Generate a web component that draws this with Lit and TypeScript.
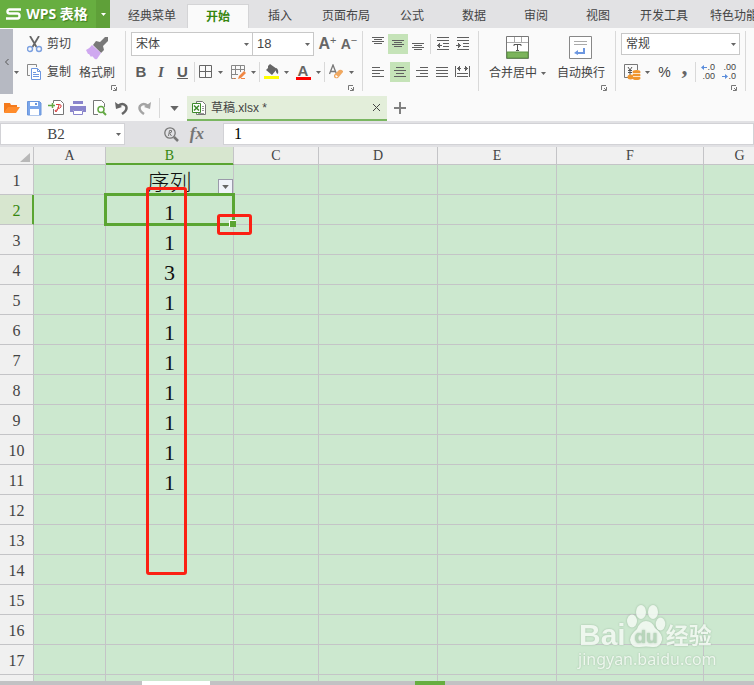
import { LitElement, html, css, nothing } from "lit";
import { customElement, state } from "lit/decorators.js";
import { classMap } from "lit/directives/class-map.js";

const GREY = "#5f5f5f";

const caret = html`<svg class="caret" width="5" height="3" viewBox="0 0 5 3" aria-hidden="true"><path d="M0 0h5L2.5 3z" fill="currentColor"/></svg>`;
const launcher = html`<button class="launcher" aria-label="更多设置"><svg width="6" height="6" viewBox="0 0 6 6"><path d="M.5 5V.5H5" fill="none" stroke="#777"/><path d="M5.500 2v3.500H2M3 3l2 2" fill="none" stroke="#777"/></svg></button>`;

const scissors = html`<svg width="16" height="17" viewBox="0 0 16 17"><path d="M3 0l6.500 11M12 0L5.500 11" stroke="#666" stroke-width="1.800" fill="none"/><circle cx="3" cy="13" r="2.500" fill="none" stroke="#7ba0e0" stroke-width="1.400"/><circle cx="12" cy="13" r="2.500" fill="none" stroke="#7ba0e0" stroke-width="1.400"/></svg>`;
const copy = html`<svg width="16" height="17" viewBox="0 0 16 17"><path d="M3 11.500H.5V.5h9V3" fill="none" stroke="#888"/><path d="M4.500 4.500h6l3 3v8h-9z" fill="#fff" stroke="#6d97e0"/><path d="M10.500 4.500v3h3" fill="none" stroke="#6d97e0"/><path d="M6 8.500h3M6 10.500h6M6 12.500h6" stroke="#6d97e0"/></svg>`;
const brush = html`<svg width="24" height="24" viewBox="0 0 24 24"><path d="M20 1l3 0 0 4-5 5 1 4-3 3-8-8 3-4 4 1z" fill="#787878"/><path d="M7 9l9 8-4 6q-2 1-3-1l-2-2-1 1-2-3-1 0-2-4q4-2 6-5z" fill="#cfa8f0"/></svg>`;
const borders = html`<svg width="14" height="14" viewBox="0 0 14 14"><path d="M.5.5h12v12H.5zM6.500 1v12M1 6.500h12" fill="none" stroke="#666"/></svg>`;
const drawGrid = html`<svg width="16" height="15" viewBox="0 0 16 15"><path d="M.5.5h13v6M.5.5v13H5M4.500 1v9M9.500 1v6M1 4.500h12M1 9.500h6" fill="none" stroke="#888"/><path d="M8 11l5-5 2 2-5 5-3 1z" fill="#f08744"/><path d="M2 13.500h1M4 13.500h1M10 13.500h4" stroke="#f08744"/></svg>`;
const bucket = html`<svg width="16" height="16" viewBox="0 0 16 16"><path d="M6 0l7 5-5 6-6-5 2-2V2z" fill="#666"/><path d="M12 4q3 1 2 6-3-1-2-6z" fill="#666"/><path d="M0 12h15v3H0z" fill="#ff0"/></svg>`;
const eraser = html`<svg width="16" height="16" viewBox="0 0 16 16"><path d="M.5 10L4 1l3.500 9M2 7.500h4" stroke="#777" stroke-width="1.300" fill="none"/><path d="M5 11l5-5q2-1 4 1v1l-5 6q-3 1-4-1z" fill="#f0a860"/><path d="M7 11l2 1.500-1.500 1L6 12z" fill="#fff"/></svg>`;
const lines = (d: string) => html`<svg width="14" height="14" viewBox="0 0 14 14"><path d=${d} stroke=${GREY} fill="none"/></svg>`;
const alignTop = lines("M1 .5h12M3 2.500h8M1 4.500h12M3 6.500h8");
const alignMiddle = lines("M1 3.500h12M3 5.500h8M1 7.500h12M3 9.500h8");
const alignBottom = lines("M1 6.500h12M3 8.500h8M1 10.500h12M3 12.500h8");
const outdent = lines("M1 .5h12M1 3.500h12M7 6.500h6M7 9.500h6M1 12.500h12M1 8.500h5M3.500 6v5M2.500 7v3");
const indent = lines("M1 .5h12M1 3.500h12M7 6.500h6M7 9.500h6M1 12.500h12M0 8.500h5M2.500 6v5M3.500 7v3");
const left = lines("M1 2.500h8M1 5.500h12M1 8.500h8M1 11.500h12");
const center = lines("M3 2.500h8M1 5.500h12M3 8.500h8M1 11.500h12");
const right = lines("M5 2.500h8M1 5.500h12M5 8.500h8M1 11.500h12");
const justify = lines("M1 2.500h12M1 5.500h12M1 8.500h12M1 11.500h12");
const distribute = html`<svg width="15" height="14" viewBox="0 0 15 14"><path d="M.5 1v11M14.500 1v11M2 8.500h11M2 11.500h11M2 3.500h4M9 3.500h4M4.500 1v5M3.500 2v3M10.500 1v5M11.500 2v3" stroke=${GREY} fill="none"/></svg>`;
const merge = html`<svg width="24" height="24" viewBox="0 0 24 24"><path d="M.5.5h22v22H.5z" fill="#fff" stroke="#777"/><path d="M1 6.500h21M8.500 1v5M15.500 1v5" stroke="#aaa"/><path d="M1 16h21v6H1z" fill="#7cb45c" stroke="#5a9440"/><path d="M8 10V8.500h7V10M11.500 9v5M10 14.500h3" fill="none" stroke="#555"/></svg>`;
const wrap = html`<svg width="24" height="24" viewBox="0 0 24 24"><path d="M.5.5h22v22H.5z" fill="#fff" stroke="#888"/><path d="M5 5.500h13M5 8.500h13" stroke="#aaa"/><path d="M14 12h2v6H9v1l-4-2 4-3v2h5z" fill="#6d97e0"/></svg>`;
const coins = html`<svg width="17" height="17" viewBox="0 0 17 17"><path d="M8 13.500H.5V.5h13V6" fill="none" stroke="#777"/><path d="M4 3l2 3 2-3M6 6v5M4 6.500h4M4 8.500h4" fill="none" stroke="#555"/><g fill="#f0962e"><ellipse cx="12.500" cy="8" rx="4" ry="2"/><ellipse cx="12.500" cy="11" rx="4" ry="2"/><ellipse cx="12.500" cy="14" rx="4" ry="2"/><ellipse cx="6.500" cy="13" rx="3" ry="2.500"/></g><path d="M9 9.500h7M9 12.500h7" stroke="#fde4c4"/></svg>`;
const arrowLeft = html`<svg width="6" height="5" viewBox="0 0 6 5"><path d="M0 2.500L3 0v2h3v1H3v2z" fill="#5b8ddb"/></svg>`;
const arrowRight = html`<svg width="6" height="5" viewBox="0 0 6 5"><path d="M6 2.500L3 0v2H0v1h3v2z" fill="#5b8ddb"/></svg>`;

const open = html`<svg width="16" height="14" viewBox="0 0 16 14"><path d="M0 12V2h6l1 2h6v2H5z" fill="#f47a1c"/><path d="M4 6h12l-4 6H0z" fill="#ff8c2c"/></svg>`;
const save = html`<svg width="15" height="15" viewBox="0 0 15 15"><path d="M.5.5h12l1.500 1.500v12H.5z" fill="#7ba6ea" stroke="#6b96dc"/><path d="M3 1h8v4H3zM3 8h9v6H3z" fill="#fff"/><path d="M8 2h2v2H8z" fill="#6b96dc"/></svg>`;
const pdf = html`<svg width="17" height="16" viewBox="0 0 17 16"><path d="M5.500 9v5.500h10v-11l-3-3h-7V3" fill="#fff" stroke="#777"/><path d="M8 4.500h3q3 0 2 2.500-1 2-4 1M11 4.500q0 4-3 7.500l-1-1.500 3-1" fill="none" stroke="#d64040"/><path d="M0 5.500h2M4.500 3v5M2 5.500h5" fill="none" stroke="#63a843" stroke-width="1.500"/></svg>`;
const print = html`<svg width="16" height="14" viewBox="0 0 16 14"><path d="M3 0h10v3H3zM0 5h16v6H0z" fill="#8a85cc"/><path d="M3 4h10M3 9.500h10" stroke="#fff"/><path d="M3.500 9.500h9v4h-9z" fill="#fff" stroke="#8a85cc"/></svg>`;
const preview = html`<svg width="14" height="16" viewBox="0 0 14 16"><path d="M5 14.500H.5V.5h8l3 3V7" fill="#fff" stroke="#777"/><circle cx="8" cy="9.500" r="3" fill="#fff" stroke="#63a843" stroke-width="1.500"/><path d="M10 12l3 3" stroke="#63a843" stroke-width="2"/></svg>`;
const undo = html`<svg width="14" height="14" viewBox="0 0 14 14"><path d="M3 5q5-4 8 0 2 4-4 8" fill="none" stroke="#666" stroke-width="2.500"/><path d="M0 1l1 7 6-2z" fill="#666"/></svg>`;
const redo = html`<svg width="14" height="14" viewBox="0 0 14 14"><path d="M11 5Q6 1 3 5q-2 4 4 8" fill="none" stroke="#a4a4a4" stroke-width="2.500"/><path d="M14 1l-1 7-6-2z" fill="#a4a4a4"/></svg>`;
const workbook = html`<svg width="14" height="14" viewBox="0 0 14 14"><path d="M4.500.5h6l3 3v10h-9z" fill="#fff" stroke="#777"/><path d="M10 5.500h2M10 7.500h2M10 9.500h2M6 12.500h6" stroke="#999"/><path d="M.5 2.500h8v9h-8z" fill="#fff" stroke="#3d8a2c"/><path d="M2 4.500l5 5M7 4.500l-5 5" stroke="#3d8a2c" stroke-width="1.500"/></svg>`;
const lookup = html`<svg width="15" height="15" viewBox="0 0 15 15"><circle cx="6" cy="6" r="5.200" fill="none" stroke="#777" stroke-width="1.300"/><path d="M10 10l4 4" stroke="#777" stroke-width="2.500"/><path d="M4.500 9l1-5.500h2q1 2-2 2.500l2 3" fill="none" stroke="#777"/></svg>`;

const TABS = ["经典菜单", "开始", "插入", "页面布局", "公式", "数据", "审阅", "视图", "开发工具", "特色功能"];
const COLUMNS = ["A", "B", "C", "D", "E", "F", "G"];
const VALUES = ["序列", "1", "1", "3", "1", "1", "1", "1", "1", "1", "1"];
const ROWS = 17;

@customElement("app-root")
export class AppRoot extends LitElement {
  @state() private active = "开始";

  static styles = css`
    :host { display: flex; flex-direction: column; height: 100vh; overflow: hidden; background: #fafafa; color: #444; font: 12px/16px "Liberation Sans", "Noto Sans CJK SC", sans-serif; }
    * { box-sizing: border-box; }
    svg { display: block; flex: none; }
    button, input, select { font: inherit; color: inherit; margin: 0; padding: 0; border: 0; background: none; border-radius: 0; outline: 0; }
    button { display: flex; align-items: center; justify-content: center; white-space: nowrap; flex: none; }
    .caret { color: #666; }

    .titlebar { display: flex; flex: none; height: 28px; background: #e2e2e4; overflow: hidden; }
    .brand { width: 96px; padding-right: 2px; background: #67ae40; color: #fff; gap: 5px; font: bold 14px/20px "Open Sans", "Noto Sans CJK SC", sans-serif; text-shadow: 1px 1px 1px #3f7d22; }
    .brand-menu { width: 14px; background: #5fa039; margin-right: 7px; }
    .brand-menu .caret { color: #fff; }
    .tabs { display: flex; align-items: flex-end; }
    .tab { height: 24px; min-width: 62px; padding: 0 11px; }
    .tab.on { background: #fafafa; color: #35860f; font-weight: bold; border: 1px solid #d4d4d6; border-bottom: 0; }

    .ribbon { display: flex; flex: none; height: 67px; overflow: hidden; padding-top: 1px; }
    .collapse { width: 13px; height: 65px; background: #b6b9c2; }
    .group { position: relative; flex: none; height: 60px; margin-top: 2px; border-right: 1px solid #d9d9d9; display: flex; flex-direction: column; gap: 2px; }
    .launcher { position: absolute; right: 8px; bottom: 0; }
    .row { display: flex; align-items: center; height: 26px; }
    .sep { width: 1px; height: 20px; background: #d9d9d9; flex: none; }
    .clip { width: 113px; flex-direction: row; gap: 8px; padding-left: 1px; }
    .edge { width: 5px; height: 38px; align-self: flex-end; }
    .stack { display: flex; flex-direction: column; gap: 2px; }
    .stack button { height: 26px; gap: 4px; }
    .big { flex-direction: column; height: 52px; justify-content: space-between; padding: 5px 0 2px; }
    .big .text { display: flex; align-items: center; gap: 4px; }
    .font { width: 237px; padding-left: 5px; }
    .pick { position: relative; display: flex; align-items: center; height: 24px; border: 1px solid #c8c8c8; background: #fff; }
    .pick select { appearance: none; width: 100%; height: 100%; padding-left: 4px; }
    .pick .caret { position: absolute; right: 3px; pointer-events: none; }
    .pick.family { width: 122px; }
    .pick.size { width: 62px; margin-left: -1px; }
    .size select { font-size: 13px; }
    .pick.format { width: 119px; height: 22px; }
    .grow { width: 23px; font-size: 16px; font-weight: bold; color: #666; margin-left: 2px; }
    .grow.small { font-size: 14px; margin: 0; width: 20px; }
    sup { font-size: 11px; line-height: 8px; align-self: flex-start; font-weight: normal; }
    .b { width: 20px; font: bold 15px/20px "Liberation Sans", sans-serif; color: #5c5c5c; }
    .i { font-family: "Liberation Serif", serif; font-style: italic; }
    .u { text-decoration: underline; width: 23px; }
    .drop { width: 32px; gap: 5px; }
    .wide { gap: 4px; }
    .ink { font: bold 15px/12px "Liberation Sans", sans-serif; color: #666; border-bottom: 3px solid #f00; width: 15px; text-align: center; }
    .align { width: 116px; padding-left: 5px; }
    .align button { width: 20px; height: 20px; }
    .align .row2 button:nth-child(2), .align .row2 button:nth-child(1) { margin-right: 2px; }
    .align .on { background: #c5e3b8; }
    .align .sep { margin: 0 2px; }
    .cells { width: 137px; flex-direction: row; gap: 11px; padding-left: 10px; }
    .number { width: 130px; padding-left: 5px; }
    .percent { width: 23px; font-size: 14px; }
    .comma { width: 19px; font: bold 24px/10px "Liberation Serif", serif; color: #666; padding: 0 2px 12px 0; }
    .decimal { flex-direction: column; width: 19px; font-size: 9px; line-height: 9px; align-items: flex-end; }
    .decimal span { display: flex; align-items: center; }
    .decimal + .decimal { margin-left: 2px; }

    .docbar { display: flex; align-items: center; flex: none; height: 26px; }
    .quick { display: flex; width: 159px; padding-left: 1px; }
    .quick button { width: 22px; }
    .more { width: 29px; }
    .more svg { width: 9px; height: 5px; }
    .doc { display: flex; align-items: center; gap: 5px; width: 200px; height: 25px; margin-left: -2px; padding: 0 6px 0 5px; background: #e3eeda; border-bottom: 2px solid #7ab661; align-self: flex-end; }
    .doc .name { flex: 1; color: inherit; text-decoration: none; }
    .add { width: 26px; }

    .formula { display: flex; align-items: center; flex: none; height: 26px; background: #e1e1e4; font-family: "Liberation Serif", serif; }
    .namebox { position: relative; width: 125px; height: 22px; display: flex; align-items: center; background: #fff; border: 1px solid #d2d2d6; }
    .namebox input { width: 110px; text-align: center; font-size: 15px; }
    .namebox .caret { position: absolute; right: 3px; }
    .tools { display: flex; align-items: center; justify-content: flex-end; gap: 11px; width: 98px; padding-right: 19px; }
    .fx { font: italic bold 17px/20px "Liberation Serif", serif; color: #757575; }
    .entry { flex: 1; min-width: 0; height: 22px; padding-left: 10px; background: #fff; border: 1px solid #d2d2d6; font-size: 16px; color: #000; }

    .sheet { position: relative; flex: 1; min-height: 0; overflow: hidden; background: #cce8cf; }
    table { table-layout: fixed; border-collapse: separate; border-spacing: 0; width: 100%; min-width: 776px; }
    th, td { border: 0 solid #c4c4c7; border-width: 0 1px 1px 0; padding: 0; text-align: center; overflow: visible; }
    th { background: #f0f0f0; font: 16px/20px "Liberation Serif", serif; color: #444; }
    thead th { height: 18px; line-height: 16px; padding-top: 1px; font-size: 14px; }
    tbody th, td { height: 30px; }
    tbody th { padding-top: 2px; }
    td { position: relative; font: 22px/23px "Liberation Serif", "Noto Sans CJK SC", serif; color: #111; padding-top: 6px; }
    td.title { font-weight: 300; }
    thead th.on { background: #d7e6cf; color: #35860f; border-bottom-color: #5aa532; box-shadow: inset 0 -1px #5aa532; }
    tbody th.on { background: #d7e6cf; color: #35860f; border-right-color: #5aa532; box-shadow: inset -1px 0 #5aa532; }
    .c0 { width: 34px; } .c1 { width: 72px; } .c2 { width: 128px; } .c3 { width: 85px; } .c4, .c5 { width: 119px; } .c6 { width: 147px; }
    .corner svg { margin: 2px 3px 0 auto; }
    .filter { position: absolute; right: 0; bottom: 0; width: 15px; height: 15px; background: #f0f3fa; border: 1px solid #9a9aaa; z-index: 1; }
    .filter svg { width: 7px; height: 4px; }
    .cursor { position: absolute; inset: -2px; border: 3px solid #5aa532; z-index: 1; }
    .handle { position: absolute; right: -4px; bottom: -4px; width: 7px; height: 7px; background: #5aa532; border: 1px solid #fff; border-width: 1px 0 0 1px; }
    .mark { position: absolute; border: 3px solid #fb2013; border-radius: 3px; z-index: 2; }
    .mark.column { left: 146px; top: 40px; width: 41px; height: 388px; }
    .mark.corner-mark { left: 217px; top: 67px; width: 35px; height: 21px; }

    .watermark { position: absolute; right: 40px; bottom: 12px; z-index: 2; width: 136px; color: #f4faf4; opacity: .85; text-shadow: 0 0 2px #93b097; white-space: nowrap; }
    .logo { display: flex; align-items: flex-end; height: 45px; font: bold 30px/28px "Liberation Sans", sans-serif; padding-left: 1px; }
    .logo .zh { font: bold 23px/30px "Noto Sans CJK SC", sans-serif; }
    .site { font: 16px/20px "Noto Sans", sans-serif; }
    .paw { filter: drop-shadow(0 0 1px #93b097); }

    .status { display: flex; flex: none; height: 4px; background: #c2c2c4; }
    .sheet-tab { width: 68px; margin-left: 142px; background: #fff; }
    .mode { width: 30px; margin-left: 205px; background: #67ae40; }
  `;

  private btn(label: string, content: unknown, cls = "") {
    return html`<button class=${cls} aria-label=${label}>${content}</button>`;
  }

  private cell(row: number, col: number) {
    if (col !== 1) return html`<td></td>`;
    return html`<td class=${row === 0 ? "title" : ""}>${VALUES[row] ?? nothing}
      ${row === 0 ? html`<button class="filter" aria-label="筛选">${caret}</button>` : nothing}
      ${row === 1 ? html`<div class="cursor"><div class="handle"></div></div>` : nothing}</td>`;
  }

  render() {
    return html`
      <header class="titlebar">
        <button class="brand"><svg width="15" height="12" viewBox="0 0 15 12"><path d="M15 1.500H3.500q-2 0-2 2T3.500 5.500h8q2 0 2 2.500t-2 2.500H0" fill="none" stroke="#fff" stroke-width="2.400"/></svg>WPS 表格</button>
        ${this.btn("主菜单", caret, "brand-menu")}
        <nav class="tabs">${TABS.map((t) => html`<button class=${classMap({ tab: true, on: t === this.active })} @click=${() => (this.active = t)}>${t}</button>`)}</nav>
      </header>

      <section class="ribbon">
        ${this.btn("收起", html`<svg width="4" height="6" viewBox="0 0 4 6"><path d="M3.500 0l-3 3 3 3" fill="none" stroke="#555"/></svg>`, "collapse")}
        <div class="group clip">
          ${this.btn("粘贴选项", caret, "edge")}
          <div class="stack"><button>${scissors}剪切</button><button>${copy}复制</button></div>
          <button class="big">${brush}<span class="text">格式刷</span></button>
          ${launcher}
        </div>
        <div class="group font">
          <div class="row">
            <label class="pick family"><select aria-label="字体"><option>宋体</option></select>${caret}</label>
            <label class="pick size"><select aria-label="字号"><option>18</option></select>${caret}</label>
            <button class="grow">A<sup>+</sup></button><button class="grow small">A<sup>−</sup></button>
          </div>
          <div class="row">
            <button class="b">B</button><button class="b i">I</button><button class="b u">U</button><i class="sep"></i>
            ${this.btn("边框", html`${borders}${caret}`, "drop")}
            ${this.btn("绘图边框", html`${drawGrid}${caret}`, "drop wide")}<i class="sep"></i>
            ${this.btn("填充颜色", html`${bucket}${caret}`, "drop wide")}
            ${this.btn("字体颜色", html`<span class="ink">A</span>${caret}`, "drop")}<i class="sep"></i>
            ${this.btn("清除", html`${eraser}${caret}`, "drop wide")}
          </div>
          ${launcher}
        </div>
        <div class="group align">
          <div class="row">
            ${this.btn("顶端对齐", alignTop)}${this.btn("垂直居中", alignMiddle, "on")}${this.btn("底端对齐", alignBottom)}<i class="sep"></i>
            ${this.btn("减少缩进", outdent)}${this.btn("增加缩进", indent)}
          </div>
          <div class="row row2">
            ${this.btn("左对齐", left)}${this.btn("水平居中", center, "on")}${this.btn("右对齐", right)}${this.btn("两端对齐", justify)}${this.btn("分散对齐", distribute)}
          </div>
        </div>
        <div class="group cells">
          <button class="big">${merge}<span class="text">合并居中${caret}</span></button>
          <button class="big">${wrap}<span class="text">自动换行</span></button>
          ${launcher}
        </div>
        <div class="group number">
          <div class="row"><label class="pick format"><select aria-label="数字格式"><option>常规</option></select>${caret}</label></div>
          <div class="row">
            ${this.btn("货币", html`${coins}${caret}`, "drop wide")}
            <button class="percent">%</button><button class="comma">,</button><i class="sep"></i>
            <button class="decimal"><span>${arrowLeft}.0</span><span>.00</span></button>
            <button class="decimal"><span>.00</span><span>${arrowRight}.0</span></button>
          </div>
          ${launcher}
        </div>
      </section>

      <section class="docbar">
        <div class="quick">
          ${this.btn("打开", open)}${this.btn("保存", save)}${this.btn("输出为PDF", pdf)}${this.btn("打印", print)}${this.btn("打印预览", preview)}${this.btn("撤销", undo)}${this.btn("恢复", redo)}
        </div>
        <i class="sep"></i>
        ${this.btn("更多", caret, "more")}
        <div class="doc">${workbook}<a class="name" href="#">草稿.xlsx *</a>
          ${this.btn("关闭", html`<svg width="9" height="9" viewBox="0 0 9 9"><path d="M1 1l7 7M8 1L1 8" stroke="#444"/></svg>`)}</div>
        ${this.btn("新建", html`<svg width="12" height="12" viewBox="0 0 12 12"><path d="M6 0v12M0 6h12" stroke="#808080" stroke-width="2"/></svg>`, "add")}
      </section>

      <section class="formula">
        <label class="namebox"><input aria-label="名称框" .value=${"B2"} />${caret}</label>
        <div class="tools">${this.btn("查找", lookup)}<button class="fx">fx</button></div>
        <input class="entry" aria-label="编辑栏" .value=${"1"} />
      </section>

      <main class="sheet">
        <table>
          <colgroup>${[0, 1, 2, 3, 4, 5, 6, 7].map((n) => html`<col class="c${n}" />`)}</colgroup>
          <thead><tr><th class="corner"><svg width="10" height="9" viewBox="0 0 10 9"><path d="M10 0v9H0z" fill="#b8b8b8"/></svg></th>${COLUMNS.map((c) => html`<th class=${c === "B" ? "on" : ""}>${c}</th>`)}</tr></thead>
          <tbody>
            ${Array.from({ length: ROWS }, (_, r) => html`<tr><th class=${r === 1 ? "on" : ""}>${r + 1}</th>${COLUMNS.map((_c, c) => this.cell(r, c))}</tr>`)}
            <tr><th></th>${COLUMNS.map(() => html`<td></td>`)}</tr>
          </tbody>
        </table>
        <div class="mark column"></div>
        <div class="mark corner-mark"></div>
        <div class="watermark">
          <div class="logo"><span>Bai</span><svg class="paw" width="40" height="45" viewBox="0 0 40 45"><g fill="#f4faf4"><ellipse cx="6" cy="17" rx="5" ry="6.500"/><ellipse cx="15" cy="8" rx="5" ry="7"/><ellipse cx="27" cy="8" rx="5" ry="7"/><ellipse cx="34.500" cy="20" rx="4.800" ry="6.500"/><path d="M20 17q6 0 9 7 8 6 7 12-2 8-10 7-6-1-12 0-9 1-10-7 0-5 7-11 3-8 9-8z"/></g><text x="20" y="39" text-anchor="middle" font-family="Liberation Sans" font-weight="bold" font-size="19" fill="#b5d3b8">du</text></svg><span class="zh">经验</span></div>
          <div class="site">jingyan.baidu.com</div>
        </div>
      </main>

      <footer class="status"><div class="sheet-tab"></div><div class="mode"></div></footer>
    `;
  }
}
